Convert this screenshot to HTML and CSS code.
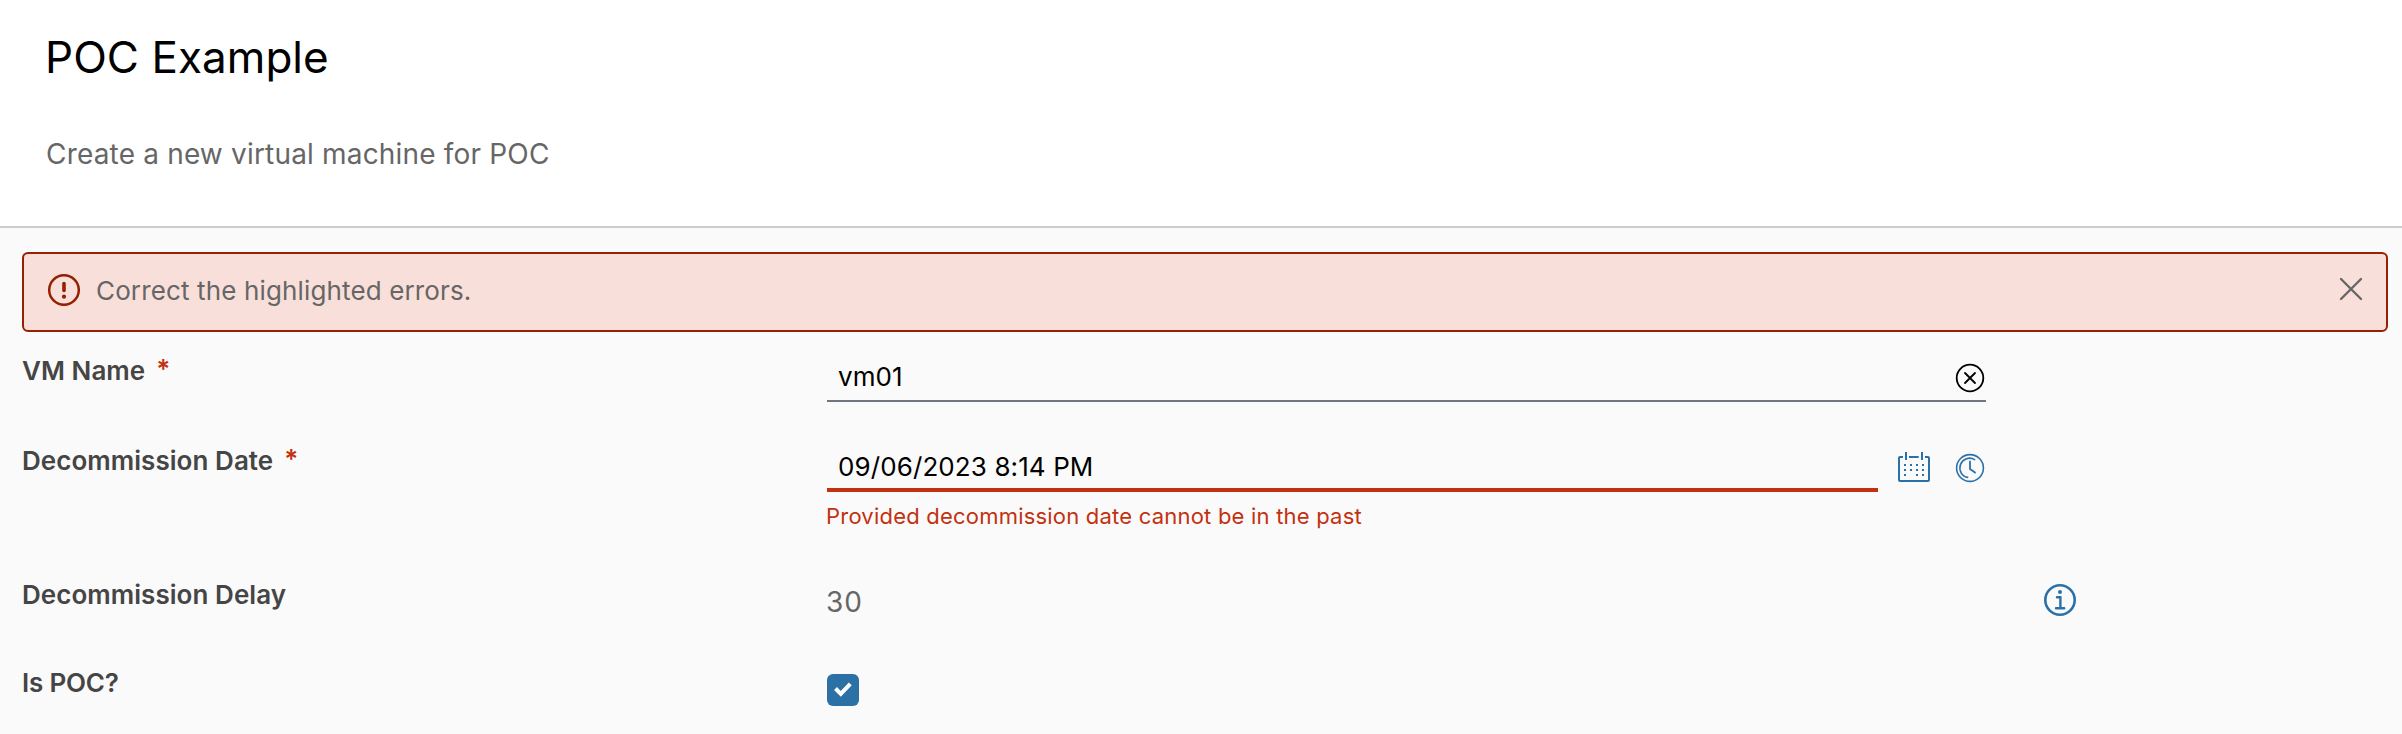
FILE: index.html
```html
<!DOCTYPE html>
<html lang="en">
<head>
<meta charset="utf-8">
<title>POC Example</title>
<link rel="stylesheet" href="styles.css">
</head>
<body>
<header class="header">
  <h1 class="title">POC Example</h1>
  <p class="subtitle">Create a new virtual machine for POC</p>
</header>
<main class="content">
  <div class="alert" role="alert">
    <svg class="alert-icon" width="32" height="32" viewBox="0 0 32 32">
      <circle cx="16" cy="16" r="14.8" fill="none" stroke="currentColor" stroke-width="2.5"/>
      <path d="M16 9.5v7" stroke="currentColor" stroke-width="3.6" stroke-linecap="round"/>
      <circle cx="16" cy="22.7" r="2.1" fill="currentColor"/>
    </svg>
    <span class="alert-text">Correct the highlighted errors.</span>
    <svg class="alert-close" width="24" height="24" viewBox="0 0 24 24">
      <path d="M2 2l20 20M22 2L2 22" stroke="currentColor" stroke-width="2.4" stroke-linecap="round"/>
    </svg>
  </div>
  <form class="form">
    <div class="row row-name">
      <label class="label">VM Name<span class="required">*</span></label>
      <div class="field input">
        <span class="value">vm01</span>
        <svg class="clear" width="32" height="32" viewBox="0 0 32 32" fill="none" stroke="currentColor" stroke-width="1.8">
          <circle cx="16" cy="16" r="13.3"/>
          <path d="M11 11l10 10M21 11L11 21" stroke-linecap="round"/>
        </svg>
      </div>
    </div>
    <div class="row row-date">
      <label class="label">Decommission Date<span class="required">*</span></label>
      <div class="field">
        <div class="date">
          <div class="input input-error"><span class="value">09/06/2023 8:14 PM</span></div>
          <svg class="calendar" width="32" height="30" viewBox="0 0 32 30">
            <path d="M5 5H2Q1 5 1 6V28Q1 29 2 29H30Q31 29 31 28V6Q31 5 30 5H27M11 5H20.7M8 0V8M24 0V8" fill="none" stroke="currentColor" stroke-width="2"/>
            <path d="M6 12h2v2h-2zM12 12h2v2h-2zM18 12h2v2h-2zM24 12h2v2h-2zM6 17h2v2h-2zM12 17h2v2h-2zM18 17h2v2h-2zM24 17h2v2h-2zM6 22h2v2h-2zM18 22h2v2h-2zM24 22h2v2h-2z" fill="currentColor"/>
          </svg>
          <svg class="clock" width="32" height="32" viewBox="0 0 32 32" fill="none" stroke="currentColor" stroke-width="1.6" stroke-linecap="round">
            <circle cx="16" cy="16" r="13.4"/>
            <path d="M20.6 7.6A9.7 9.7 0 1 0 13.6 25.4"/>
            <path d="M16 9.5V17L21 20.6" stroke-width="1.8"/>
          </svg>
        </div>
        <p class="error">Provided decommission date cannot be in the past</p>
      </div>
    </div>
    <div class="row row-delay">
      <label class="label">Decommission Delay</label>
      <div class="field static">30</div>
      <svg class="info" width="32" height="32" viewBox="0 0 32 32" fill="none" stroke="currentColor">
        <circle cx="16" cy="16" r="14.7" stroke-width="2.6"/>
        <circle cx="16" cy="8" r="2" fill="currentColor" stroke="none"/>
        <path d="M13 13.2h3.4V24M12 24.2h8.2" stroke-width="2.4" stroke-linecap="round"/>
      </svg>
    </div>
    <div class="row row-poc">
      <label class="label label-poc">Is POC?</label>
      <span class="checkbox">
        <svg width="32" height="32" viewBox="0 0 32 32"><path d="M8.5 14.5L13.8 19.8L23.3 9.8" fill="none" stroke="#fff" stroke-width="4"/></svg>
      </span>
    </div>
  </form>
</main>
</body>
</html>
```
FILE: styles.css
```css
* { box-sizing: border-box; }

body {
  margin: 0;
  min-height: 734px;
  background: #fafafa;
  color: #666;
  font-family: Inter, "Open Sans", sans-serif;
  font-size: 26px;
  line-height: 48px;
}

svg { display: block; flex: none; }

.header {
  height: 228px;
  padding: 27px 45px 0;
  background: #fff;
  border-bottom: 2px solid #ccc;
}

.title {
  margin: 0 0 43px;
  color: #000;
  font-size: 44px;
  font-weight: 400;
  line-height: 60px;
  letter-spacing: 0.05px;
}

.subtitle {
  margin: 0 0 0 1px;
  font-size: 28px;
  letter-spacing: 0.18px;
}

.content { padding: 24px 14px 0 22px; }

.alert {
  display: flex;
  align-items: flex-start;
  height: 80px;
  padding: 13px 23px 0 24px;
  background: #f9dfd9;
  border: 2px solid #942103;
  border-radius: 6px;
}

.alert-icon { margin: 7px 16px 0 0; color: #942103; }
.alert-text { flex: 1; letter-spacing: 0.14px; }
.alert-close { margin-top: 10px; }

.form { margin-top: 14px; }

.row {
  display: grid;
  grid-template-columns: 805px 1159px 32px;
  align-items: start;
}

.row-name { height: 90px; }
.row-date { height: 134px; }
.row-delay { height: 88px; }

.label {
  padding-top: 1px;
  color: #454545;
  font-weight: 600;
  letter-spacing: 0.05px;
}

.label-poc { letter-spacing: -0.2px; }

.required {
  margin-left: 11px;
  color: #c23110;
  vertical-align: 2px;
  line-height: 1;
}

.field { margin-top: 6px; }

.input {
  display: flex;
  justify-content: space-between;
  height: 50px;
  padding-left: 11px;
  border-bottom: 2px solid #6f7681;
  color: #000;
  letter-spacing: 0.1px;
}

.value { padding-top: 1px; }

.clear { margin-top: 10px; }

.date { display: flex; width: 1159px; }

.input-error {
  width: 1051px;
  border-bottom: 4px solid #c23110;
}

.calendar { margin: 10px 0 0 20px; color: #2b71a9; }
.clock { margin: 10px 0 0 24px; color: #2b71a9; }

.error {
  margin: 8px 0 0 -1px;
  color: #c23110;
  font-size: 22px;
  line-height: 32px;
  letter-spacing: 0.21px;
}

.static {
  margin-top: 8px;
  margin-left: -1px;
  font-size: 28px;
  letter-spacing: 1px;
}

.info { margin: 14px 0 0 58px; color: #2b71a9; }

.checkbox {
  width: 32px;
  height: 32px;
  margin-top: 16px;
  border-radius: 6px;
  background: #2b71a5;
}
```
